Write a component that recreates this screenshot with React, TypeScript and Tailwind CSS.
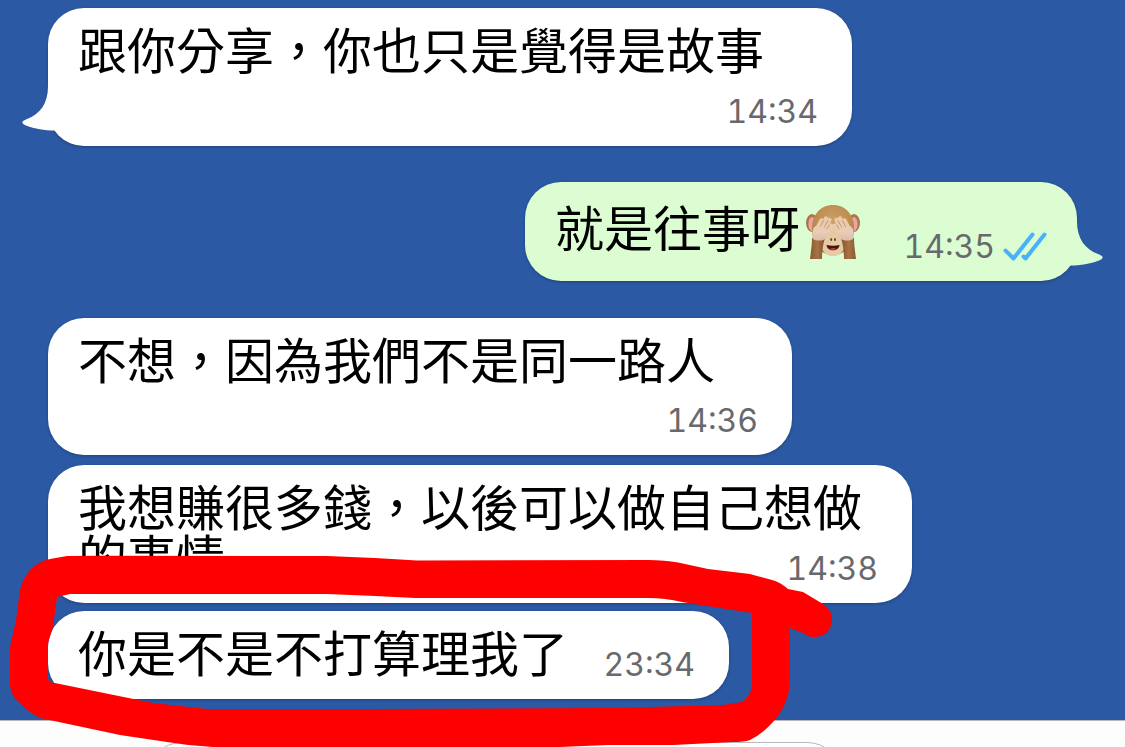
import type { ReactNode } from "react";
import clsx from "clsx";

type BubbleProps = {
  text: ReactNode;
  time: string;
  className: string;
  sent?: boolean;
  tail?: boolean;
};

function Tail({ sent }: { sent?: boolean }) {
  return (
    <svg
      aria-hidden="true"
      viewBox="0 0 40 48"
      className={clsx(
        "absolute bottom-3 h-12 w-10",
        sent ? "-right-[26px] -scale-x-100 fill-[#dbfdd1]" : "-left-[26px] fill-white",
      )}
    >
      <path d="M26 0C26 18 18 28 5 33C-1 35.500 -1 37 4 39.500C13 43 22 44.500 33 44.500L40 44.500V0Z" />
    </svg>
  );
}

function ReadTicks() {
  return (
    <svg
      role="img"
      aria-label="已讀"
      viewBox="0 0 44 30"
      className="h-[30px] w-11 fill-none stroke-[#45b2fb]"
      strokeWidth="4"
      strokeLinecap="round"
      strokeLinejoin="round"
    >
      <path d="M2.500 18.500L10.500 26.500L29.500 2.500M20.500 24.500L22.500 26.500L41.500 2.500" />
    </svg>
  );
}

function Hand() {
  return (
    <>
      <path d="M6 33H19C17 39 16 46 16 54H4C5 46 6 39 6 33Z" fill="url(#arm)" />
      <g fill="none" stroke="url(#hand)" strokeLinecap="round" strokeWidth="4.4">
        <path d="M10 26L15.500 15.500" />
        <path d="M13 27L20 13.500" />
        <path d="M16 28L23.500 15" />
        <path d="M18 30L24.500 20.500" />
      </g>
      <path
        d="M7 24C6 28 6 32 7 34C10 36 16 36 19 34C22 31 22 27 20 23C16 19 10 19 7 24Z"
        fill="url(#hand)"
      />
      <path
        d="M17.500 15.500L14.500 21.500M21.800 16L18.500 22M23.300 20L21 24"
        fill="none"
        stroke="#b98d69"
        strokeLinecap="round"
        strokeWidth="0.8"
      />
    </>
  );
}

function Monkey() {
  return (
    <svg role="img" aria-label="🙈" viewBox="0 0 54 54" className="mt-1 ml-1.5 h-[54px] w-[54px] shrink-0">
      <defs>
        <radialGradient id="fur" cx="50%" cy="35%" r="65%">
          <stop offset="0" stopColor="#cda168" />
          <stop offset="0.7" stopColor="#bb8a4d" />
          <stop offset="1" stopColor="#946533" />
        </radialGradient>
        <linearGradient id="arm" x1="0" x2="1" y1="0" y2="0">
          <stop offset="0" stopColor="#8b5930" />
          <stop offset="0.5" stopColor="#a87246" />
          <stop offset="1" stopColor="#83502b" />
        </linearGradient>
        <linearGradient id="hand" gradientUnits="userSpaceOnUse" x1="0" x2="0" y1="12" y2="37">
          <stop offset="0" stopColor="#e9c8a3" />
          <stop offset="0.6" stopColor="#e8cdb9" />
          <stop offset="1" stopColor="#d9b9a2" />
        </linearGradient>
      </defs>
      <ellipse cx="6" cy="18" rx="6" ry="9" fill="#a87742" />
      <ellipse cx="48" cy="18" rx="6" ry="9" fill="#a87742" />
      <ellipse cx="6" cy="19" rx="3.6" ry="7" fill="#f0a0aa" />
      <ellipse cx="48" cy="19" rx="3.6" ry="7" fill="#f0a0aa" />
      <path d="M27 0C14 0 6 10 6 24C6 39 14 50 27 50C40 50 48 39 48 24C48 10 40 0 27 0Z" fill="url(#fur)" />
      <path d="M27 19C21 20 14 33 15 41C17 48 21 51 27 51C33 51 37 48 39 41C40 33 33 20 27 19Z" fill="#e6caa3" />
      <path d="M20.500 40Q27 41.500 33.500 40C33 47 21 47 20.500 40Z" fill="#4a130d" />
      <path d="M23.500 43.800Q27 42.300 30.500 43.800Q27 46.300 23.500 43.800Z" fill="#b8403a" />
      <ellipse cx="25.200" cy="34.500" rx="1" ry="1.500" fill="#634628" />
      <ellipse cx="29" cy="34.500" rx="1" ry="1.500" fill="#634628" />
      <Hand />
      <g transform="matrix(-1 0 0 1 54 0)">
        <Hand />
      </g>
    </svg>
  );
}

function Bubble({ text, time, className, sent, tail }: BubbleProps) {
  return (
    <article
      className={clsx(
        "relative grid max-w-full rounded-[36px] pl-[30px] shadow-[0_1px_3px_rgba(0,0,0,0.25)]",
        sent ? "self-end bg-[#dbfdd1] pr-[30px]" : "self-start bg-white pr-[34px]",
        className,
      )}
    >
      {tail && <Tail sent={sent} />}
      <div className="relative col-start-1 row-start-1 -mr-5 flex flex-wrap content-start items-start text-[49px] leading-[50px] text-black">
        {text}
      </div>
      <div className="relative col-start-1 row-start-1 mb-3.5 flex items-center gap-2 self-end justify-self-end">
        <time className="font-['Inter',sans-serif] text-[32px] leading-10 text-[#68696d] tabular-nums">
          {time}
        </time>
        {sent && <ReadTicks />}
      </div>
    </article>
  );
}

function MarkerCircle() {
  return (
    <svg
      aria-hidden="true"
      viewBox="0 0 1125 747"
      className="pointer-events-none absolute top-0 left-0 w-[1125px] max-w-none fill-[#ff0000]"
    >
      <path
        fillRule="evenodd"
        d="M67 556L100 555.700L327 556L375 558L417 560.500L648 560Q665 560 678 562.500L708 569L750 574L757 576L772 580Q780 582 788 589L803 592L823 604Q832 610 832 619Q831 637 813 637Q808 637 803 633L790 628L790 680Q789 692 788 695Q783 712 773 722Q761 735 750 740Q744 742 733 742L673 745L608 745L560 747H213Q190 746 167 742L120 735L40 718Q28 712 20 703Q12 698 10 686L10 647L16 620L20 590Q23 577 33 567Q41 561 50 559ZM57 597L53 627L48 643L48 679L50 682L153 703L207 709L375 709L608 708L650 707L723 705L742 702Q748 699 752 688L752 613L682 602Q665 598 648 598L415 598L375 596L327 594L70 594Z"
      />
    </svg>
  );
}

export default function App() {
  return (
    <div className="relative flex h-screen flex-col overflow-hidden bg-[#fdfdfd] font-['Noto_Sans_CJK_TC',sans-serif]">
      <main className="flex shrink-0 flex-col bg-[#2b59a4] pt-2 pr-12 pb-[21px] pl-12">
        <Bubble
          className="min-h-[138px] w-[804px] pt-[15px]"
          text={<p>跟你分享，你也只是覺得是故事</p>}
          time="14:34"
          tail
        />
        <Bubble
          className="mt-9 min-h-[99px] w-[552px] pt-[19px]"
          text={
            <>
              <p>就是往事呀</p>
              <Monkey />
            </>
          }
          time="14:35"
          sent
          tail
        />
        <Bubble
          className="mt-[37px] min-h-[137px] w-[744px] pt-[15px]"
          text={<p>不想，因為我們不是同一路人</p>}
          time="14:36"
        />
        <Bubble
          className="mt-2.5 min-h-[138px] w-[864px] pt-[15px]"
          text={
            <>
              <p>我想賺很多錢，以後可以做自己想做</p>
              <p>的事情</p>
            </>
          }
          time="14:38"
        />
        <Bubble
          className="mt-2 min-h-[88px] w-[681px] pt-[15px]"
          text={<p>你是不是不打算理我了</p>}
          time="23:34"
        />
      </main>
      <footer className="shrink-0 border-t border-[#b5b7bb] bg-[#fdfdfd] pt-[21px] pr-[282px] pl-[146px]">
        <input
          type="text"
          aria-label="訊息"
          className="h-[72px] w-full rounded-[36px] border border-[#b9b9bb] bg-white px-6 text-3xl outline-none"
        />
      </footer>
      <MarkerCircle />
    </div>
  );
}
